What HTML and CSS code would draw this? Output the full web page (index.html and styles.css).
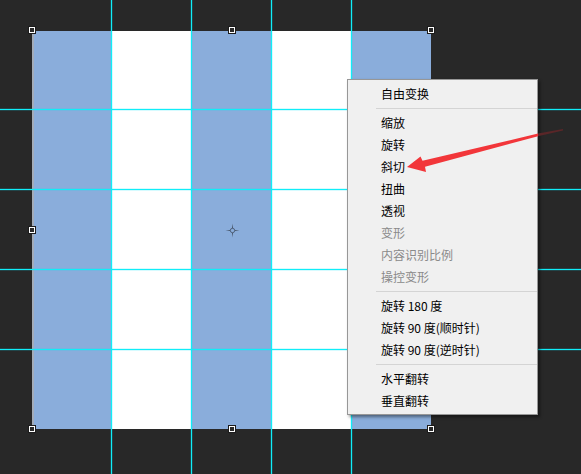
FILE: index.html
```html
<!DOCTYPE html>
<html lang="zh">
<head>
<meta charset="utf-8">
<title>自由变换</title>
<link rel="stylesheet" href="styles.css">
</head>
<body>
<div class="stage">
  <div class="canvas">
    <div class="stripe blue"></div>
    <div class="stripe white"></div>
    <div class="stripe blue"></div>
    <div class="stripe white"></div>
    <div class="stripe blue"></div>
  </div>

  <div class="guide v g1"></div>
  <div class="guide v g2"></div>
  <div class="guide v g3"></div>
  <div class="guide v g4"></div>
  <div class="guide h g1"></div>
  <div class="guide h g2"></div>
  <div class="guide h g3"></div>
  <div class="guide h g4"></div>

  <div class="handle tl"></div>
  <div class="handle tm"></div>
  <div class="handle tr"></div>
  <div class="handle ml"></div>
  <div class="handle bl"></div>
  <div class="handle bm"></div>
  <div class="handle br"></div>

  <svg class="pivot" width="15" height="15" viewBox="0 0 15 15">
    <path d="M7.5 0.5 L8.3 6.7 L14.5 7.5 L8.3 8.3 L7.5 14.5 L6.7 8.3 L0.5 7.5 L6.7 6.7 Z" fill="#4a5a70"/>
    <circle cx="7.5" cy="7.5" r="2.2" fill="#8aaddb" stroke="#4a5a70" stroke-width="0.9"/>
  </svg>

  <div class="menu">
    <div class="item">自由变换</div>
    <div class="sep"></div>
    <div class="item">缩放</div>
    <div class="item">旋转</div>
    <div class="item">斜切</div>
    <div class="item">扭曲</div>
    <div class="item">透视</div>
    <div class="item disabled">变形</div>
    <div class="item disabled">内容识别比例</div>
    <div class="item disabled">操控变形</div>
    <div class="sep"></div>
    <div class="item">旋转 180 度</div>
    <div class="item">旋转 90 度(顺时针)</div>
    <div class="item">旋转 90 度(逆时针)</div>
    <div class="sep"></div>
    <div class="item">水平翻转</div>
    <div class="item">垂直翻转</div>
  </div>

  <svg class="arrow" width="581" height="474" viewBox="0 0 581 474">
    <polygon points="538,133.6 563,129 563,130.4 538,136.2" fill="#5a2628"/>
    <polygon points="407,167 420.5,156.5 422.5,160.8 538,133.6 538,136.2 425,166.8 426,172" fill="#f2363a"/>
  </svg>
</div>
</body>
</html>
```

FILE: styles.css
```css
html, body {
  margin: 0;
  padding: 0;
  background: #282828;
}

.stage {
  position: relative;
  width: 581px;
  height: 474px;
  overflow: hidden;
  background: #282828;
  box-sizing: border-box;
  padding: 31px 0 0 32px;
}

.canvas {
  display: grid;
  grid-template-columns: 79px repeat(4, 80px);
  width: 399px;
  height: 398px;
}

.stripe.blue {
  background: #8aaddb;
}

.stripe.white {
  background: #ffffff;
}

.canvas .stripe:first-child {
  border-left: 2px solid #a3acb9;
}

.guide {
  position: absolute;
  background: #10eef8;
  box-shadow: 0 0 0 1px rgba(0, 230, 255, 0.16);
}

.guide.v {
  top: 0;
  bottom: 0;
  width: 1px;
}

.guide.h {
  left: 0;
  right: 0;
  height: 1px;
}

.guide.v.g1 { left: 111px; }
.guide.v.g2 { left: 191px; }
.guide.v.g3 { left: 271px; }
.guide.v.g4 { left: 351px; }
.guide.h.g1 { top: 109px; }
.guide.h.g2 { top: 189px; }
.guide.h.g3 { top: 269px; }
.guide.h.g4 { top: 349px; }

.handle {
  position: absolute;
  width: 4px;
  height: 4px;
  border: 1px solid #ffffff;
  background: #2a2a2a;
  outline: 1px solid #1c1c1c;
}

.handle.tl { left: 29px; top: 27px; }
.handle.tm { left: 229px; top: 27px; }
.handle.tr { left: 428px; top: 27px; }
.handle.ml { left: 29px; top: 227px; }
.handle.bl { left: 29px; top: 426px; }
.handle.bm { left: 229px; top: 426px; }
.handle.br { left: 428px; top: 426px; }

.pivot {
  position: absolute;
  left: 225px;
  top: 223px;
}

.menu {
  position: absolute;
  left: 347px;
  top: 79px;
  width: 189px;
  padding: 3px 0 2px 0;
  background: #f0f0f0;
  border: 1px solid #979797;
  box-shadow: 2px 2px 3px rgba(0, 0, 0, 0.45);
  font-family: "Noto Sans CJK SC", "Noto Sans", sans-serif;
  font-size: 12px;
  color: #000000;
}

.item {
  height: 22px;
  line-height: 22px;
  padding-left: 33px;
  white-space: nowrap;
}

.item.disabled {
  color: #8a8a8a;
}

.sep {
  height: 7px;
  margin-left: 28px;
  box-sizing: border-box;
  padding-top: 3px;
}

.sep::before {
  content: "";
  display: block;
  height: 1px;
  background: #d4d4d4;
}

.arrow {
  position: absolute;
  left: 0;
  top: 0;
  pointer-events: none;
}
```
